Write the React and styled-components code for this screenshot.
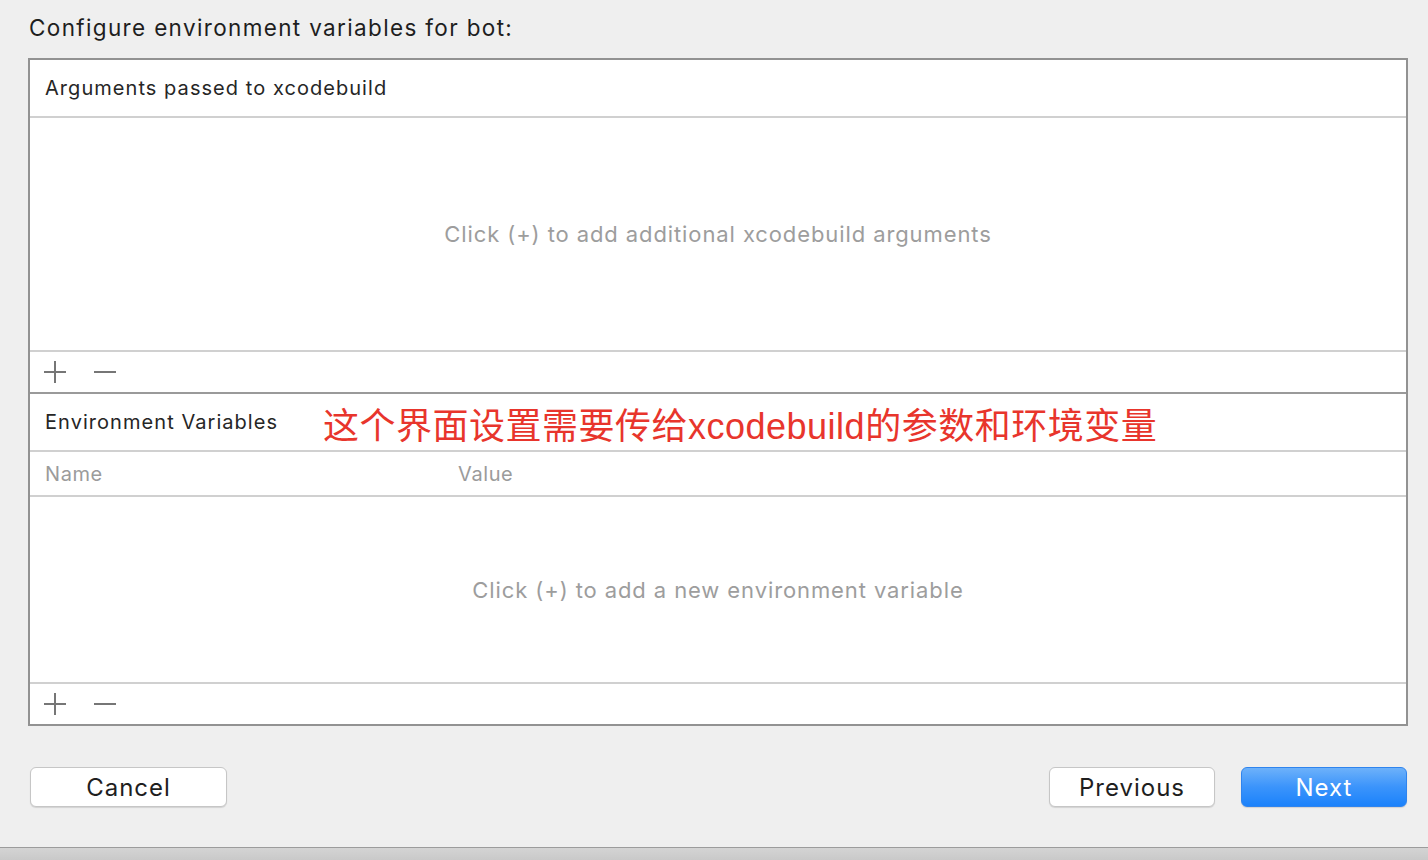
import React from "react";
import styled, { createGlobalStyle } from "styled-components";

const GlobalStyle = createGlobalStyle`
  html, body {
    margin: 0;
    padding: 0;
    background: #efefef;
  }
  body {
    font-family: Inter, "Noto Sans", "Liberation Sans", sans-serif;
    -webkit-font-smoothing: antialiased;
  }
`;

const Window = styled.div`
  width: 1428px;
  height: 860px;
  display: flex;
  flex-direction: column;
  background: #efefef;
  overflow: hidden;
`;

const Title = styled.div`
  height: 58px;
  padding: 0 0 4px 29px;
  box-sizing: border-box;
  display: flex;
  align-items: center;
  font-size: 22.5px;
  color: #1e1e1e;
  letter-spacing: 1.35px;
`;

const Box = styled.div`
  margin: 0 20px 0 28px;
  border: 2px solid #929292;
  background: #ffffff;
  display: flex;
  flex-direction: column;
`;

const Section = styled.div`
  display: flex;
  flex-direction: column;
  border-top: ${(p) => (p.$first ? "none" : "2px solid #9a9a9a")};
`;

const Header = styled.div`
  height: 56px;
  padding-left: 15px;
  display: flex;
  align-items: center;
  border-bottom: 2px solid #d0d0d0;
  font-size: 20px;
  letter-spacing: 1.05px;
  color: #262626;
`;

const HeaderLabel = styled.span`
  flex: 0 0 278px;
`;

const Annotation = styled.span`
  font-family: "Liberation Sans", "Noto Sans CJK SC", sans-serif;
  font-size: 36px;
  letter-spacing: 0.5px;
  color: #e8352c;
  margin-top: 1px;
`;

const Columns = styled.div`
  height: 43px;
  display: grid;
  grid-template-columns: 413px 1fr;
  padding-left: 15px;
  align-items: center;
  border-bottom: 2px solid #d0d0d0;
  font-size: 20px;
  letter-spacing: 0.6px;
  color: #9b9b9b;
`;

const Empty = styled.div`
  height: ${(p) => p.$height}px;
  display: flex;
  align-items: center;
  justify-content: center;
  border-bottom: 2px solid #d0d0d0;
  font-size: 22px;
  letter-spacing: 0.9px;
  color: #9d9d9d;
`;

const Toolbar = styled.div`
  height: 40px;
  padding-left: 14px;
  display: flex;
  align-items: center;
  gap: 28px;
`;

const ToolIcon = styled.svg`
  width: 22px;
  height: 22px;
  display: block;
`;

const Footer = styled.div`
  margin-top: 41px;
  height: 40px;
  padding: 0 21px 0 30px;
  display: flex;
  align-items: center;
  gap: 26px;
`;

const Spacer = styled.div`
  flex: 1;
`;

const Button = styled.button`
  width: ${(p) => p.$width}px;
  height: 40px;
  box-sizing: border-box;
  border-radius: 6px;
  font-family: Inter, "Noto Sans", "Liberation Sans", sans-serif;
  font-size: 24px;
  letter-spacing: 1px;
  padding: 0;
  cursor: pointer;
  border: 1px solid ${(p) => (p.$primary ? "#2f84ee" : "#c6c6c6")};
  color: ${(p) => (p.$primary ? "#ffffff" : "#1e1e1e")};
  background: ${(p) =>
    p.$primary
      ? "linear-gradient(to bottom, #6db1fa 0%, #3b94fb 50%, #1b82fb 100%)"
      : "#ffffff"};
  box-shadow: 0 1px 1px rgba(0, 0, 0, 0.12);
`;

const BottomEdge = styled.div`
  margin-top: auto;
  height: 12px;
  border-top: 1px solid #9c9c9c;
  background: linear-gradient(to bottom, #d4d4d4, #c9c9c9);
`;

const Plus = () => (
  <ToolIcon viewBox="0 0 22 22">
    <path d="M0 11H22M11 0V22" stroke="#767676" strokeWidth="2" fill="none" />
  </ToolIcon>
);

const Minus = () => (
  <ToolIcon viewBox="0 0 22 22">
    <path d="M0 11H22" stroke="#767676" strokeWidth="2" fill="none" />
  </ToolIcon>
);

const AddRemove = () => (
  <Toolbar>
    <Plus />
    <Minus />
  </Toolbar>
);

export default function App() {
  return (
    <Window>
      <GlobalStyle />
      <Title>Configure environment variables for bot:</Title>
      <Box>
        <Section $first>
          <Header>Arguments passed to xcodebuild</Header>
          <Empty $height={232}>Click (+) to add additional xcodebuild arguments</Empty>
          <AddRemove />
        </Section>
        <Section>
          <Header>
            <HeaderLabel>Environment Variables</HeaderLabel>
            <Annotation>这个界面设置需要传给xcodebuild的参数和环境变量</Annotation>
          </Header>
          <Columns>
            <span>Name</span>
            <span>Value</span>
          </Columns>
          <Empty $height={185}>Click (+) to add a new environment variable</Empty>
          <AddRemove />
        </Section>
      </Box>
      <Footer>
        <Button $width={197}>Cancel</Button>
        <Spacer />
        <Button $width={166}>Previous</Button>
        <Button $width={166} $primary>
          Next
        </Button>
      </Footer>
      <BottomEdge />
    </Window>
  );
}
